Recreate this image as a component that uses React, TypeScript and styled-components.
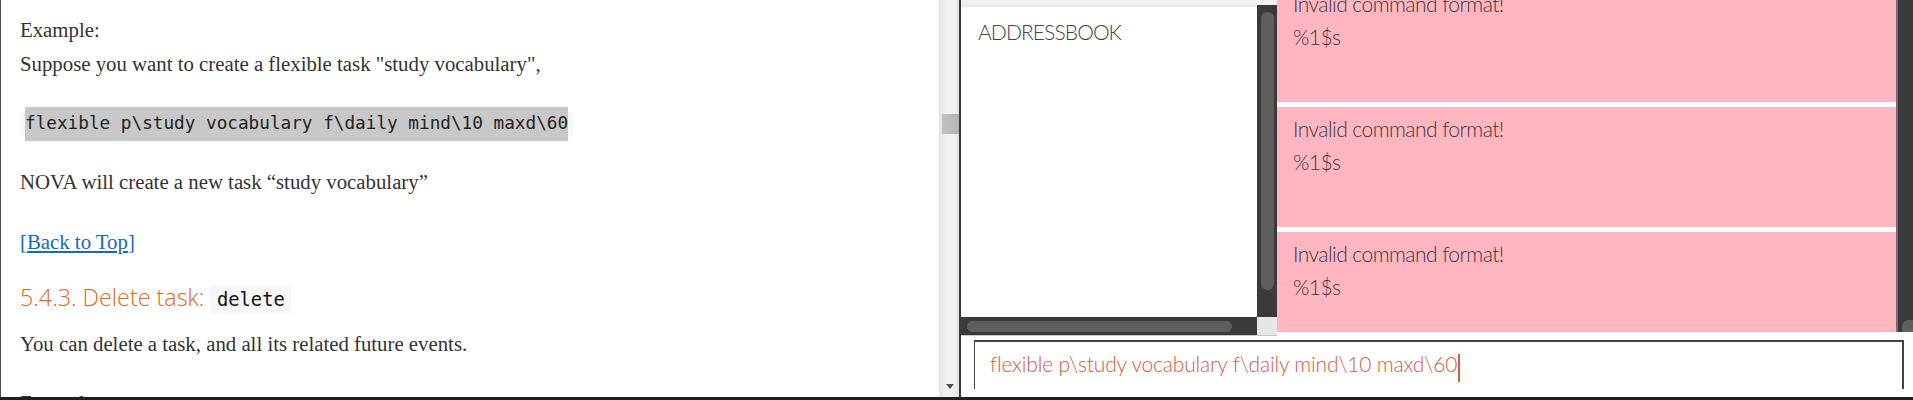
import React from "react";
import styled, { createGlobalStyle } from "styled-components";

const Global = createGlobalStyle`
  html, body { margin: 0; padding: 0; background: #fff; overflow: hidden; }
  #root { width: 1913px; height: 400px; }
`;

const Screen = styled.div`
  width: 1913px;
  height: 400px;
  display: flex;
  flex-direction: column;
  overflow: hidden;
`;

const Desktop = styled.div`
  height: 397px;
  display: flex;
  flex-direction: row;
`;

const Taskbar = styled.div`
  height: 3px;
  background: #202020;
`;

/* ---------- left document pane ---------- */
const DocPane = styled.div`
  width: 959px;
  display: flex;
  flex-direction: row;
  background: #fff;
`;

const DocContent = styled.div`
  flex: 1;
  border-left: 1px solid #4d4d4d;
  padding-left: 19px;
  overflow: hidden;
  font-family: "Liberation Serif", "Times New Roman", serif;
  font-size: 20.8px;
  line-height: 27px;
  color: #333;
`;

const Para = styled.div<{ $mt: number }>`
  margin-top: ${(p) => p.$mt}px;
  white-space: nowrap;
`;

const Link = styled.a`
  color: #1668c2;
  text-decoration: none;
  span { text-decoration: underline; }
`;

const CodeBlock = styled.div<{ $mt: number }>`
  margin-top: ${(p) => p.$mt}px;
  width: max-content;
  height: 25px;
  padding: 0 5px;
  display: flex;
  align-items: center;
  background: #f7f7f8;
  border-radius: 4px;
`;

const CodeHighlight = styled.span`
  display: block;
  height: 33.4px;
  line-height: 33px;
  background: #c8c8c8;
  font-family: "DejaVu Sans Mono", monospace;
  font-size: 17.7px;
  color: #222;
  white-space: pre;
`;

const Heading = styled.div<{ $mt: number }>`
  margin-top: ${(p) => p.$mt}px;
  font-family: "Open Sans", "DejaVu Sans", sans-serif;
  font-weight: 300;
  font-size: 23.3px;
  line-height: 32px;
  color: #e3661c;
  white-space: nowrap;
`;

const InlineCode = styled.code`
  display: inline-block;
  height: 29px;
  line-height: 29px;
  padding: 0 6px 0 6.5px;
  background: #f7f7f8;
  border-radius: 4px;
  font-family: "DejaVu Sans Mono", monospace;
  font-size: 18.8px;
  font-weight: 400;
  color: #111;
`;

const DocScrollbar = styled.div`
  width: 20px;
  display: flex;
  flex-direction: column;
  align-items: flex-end;
  background: linear-gradient(to right, #e4e4e4 0%, #f0f0f0 35%, #efefef 80%, #dcdcdc 100%);
`;

const DocThumb = styled.div`
  margin-top: 114px;
  width: 17px;
  height: 20px;
  background: linear-gradient(to right, #c2c2c2, #b4b4b4);
`;

const DocArrow = styled.div`
  margin-top: auto;
  margin-bottom: 8px;
  margin-right: 5px;
  width: 0;
  height: 0;
  border-left: 4.5px solid transparent;
  border-right: 4.5px solid transparent;
  border-top: 5px solid #505050;
`;

const Divider = styled.div`
  width: 2px;
  background: #3a3a3a;
`;

/* ---------- right application window ---------- */
const AppWindow = styled.div`
  flex: 1;
  display: flex;
  flex-direction: column;
  background: #fff;
  font-family: "Lato", "Segoe UI", sans-serif;
  font-weight: 300;
`;

const AppTop = styled.div`
  height: 336px;
  display: flex;
  flex-direction: row;
  align-items: flex-start;
`;

const ListPanel = styled.div`
  width: 316px;
  height: 336px;
  display: flex;
  flex-direction: column;
  border-bottom: 1px solid #c8c8c8;
  box-sizing: border-box;
`;

const ListBand = styled.div`
  height: 5px;
  background: #f0f0f0;
`;

const ListBody = styled.div`
  height: 312px;
  display: flex;
  flex-direction: row;
`;

const ListViewport = styled.div`
  flex: 1;
  padding: 10px 0 0 17px;
  border-top: 2px solid #e9e9e9;
  box-sizing: border-box;
  background: #fff;
`;

const ListItem = styled.div`
  font-size: 21px;
  letter-spacing: -0.9px;
  line-height: 30px;
  color: #444;
`;

const VBar = styled.div`
  width: 20px;
  background: #3a3a3a;
  display: flex;
  flex-direction: column;
  align-items: center;
`;

const VThumb = styled.div`
  margin-top: 7px;
  margin-left: 1px;
  width: 13px;
  height: 278px;
  border-radius: 6px;
  background: #5e5e5e;
`;

const HBarRow = styled.div`
  height: 18px;
  display: flex;
  flex-direction: row;
`;

const HBar = styled.div`
  flex: 1;
  background: #3a3a3a;
  padding: 4px 0 0 6px;
  box-sizing: border-box;
`;

const HThumb = styled.div`
  width: 265px;
  height: 11px;
  border-radius: 6px;
  background: #5e5e5e;
`;

const Corner = styled.div`
  width: 20px;
  background: #e6e6e6;
`;

const ResultPanel = styled.div`
  flex: 1;
  height: 332px;
  display: flex;
  flex-direction: row;
  overflow: hidden;
`;

const Cards = styled.div`
  flex: 1;
  display: flex;
  flex-direction: column;
  gap: 5px;
  margin-top: -18px;
  background: #fff;
`;

const Card = styled.div`
  height: 120px;
  flex-shrink: 0;
  background: #ffb6c1;
  padding: 5px 0 0 16px;
  box-sizing: border-box;
  font-size: 21px;
  letter-spacing: -0.55px;
  line-height: 33px;
  color: #3d3839;
`;

const ResultScroll = styled.div`
  width: 15px;
  border-left: 2px solid #7e6a74;
  background: #3a3a3a;
  display: flex;
  flex-direction: column;
  justify-content: flex-end;
  align-items: flex-end;
`;

const ResultThumb = styled.div`
  width: 11px;
  height: 16px;
  margin-bottom: -4px;
  border-radius: 6px 0 0 0;
  background: #5e5e5e;
`;

const CommandRow = styled.div`
  height: 61px;
  padding: 4px 9px 0 13px;
  box-sizing: border-box;
`;

const CommandBox = styled.div`
  height: 49px;
  border-top: 2px solid #444;
  border-left: 1px solid #444;
  border-right: 2px solid #444;
  padding-left: 15px;
  box-sizing: border-box;
  font-size: 21px;
  letter-spacing: -0.17px;
  line-height: 43px;
  color: #d9583f;
  white-space: pre;
`;

const Caret = styled.span`
  display: inline-block;
  width: 1.5px;
  height: 28px;
  margin-left: 1px;
  vertical-align: -10px;
  background: #d9583f;
`;

export default function App() {
  const cards = [0, 1, 2];
  return (
    <>
      <Global />
      <Screen>
        <Desktop>
          <DocPane>
            <DocContent>
              <Para $mt={16}>Example:</Para>
              <Para $mt={7}>Suppose you want to create a flexible task "study vocabulary",</Para>
              <CodeBlock $mt={34.5}>
                <CodeHighlight>{"flexible p\\study vocabulary f\\daily mind\\10 maxd\\60"}</CodeHighlight>
              </CodeBlock>
              <Para $mt={31}>NOVA will create a new task “study vocabulary”</Para>
              <Para $mt={33}>
                <Link href="#top">[<span>Back to Top</span>]</Link>
              </Para>
              <Heading $mt={26}>
                5.4.3. Delete task: <InlineCode>delete</InlineCode>
              </Heading>
              <Para $mt={16.5}>You can delete a task, and all its related future events.</Para>
              <Para $mt={32}>Example:</Para>
            </DocContent>
            <DocScrollbar>
              <DocThumb />
              <DocArrow />
            </DocScrollbar>
          </DocPane>
          <Divider />
          <AppWindow>
            <AppTop>
              <ListPanel>
                <ListBand />
                <ListBody>
                  <ListViewport>
                    <ListItem>ADDRESSBOOK</ListItem>
                  </ListViewport>
                  <VBar>
                    <VThumb />
                  </VBar>
                </ListBody>
                <HBarRow>
                  <HBar>
                    <HThumb />
                  </HBar>
                  <Corner />
                </HBarRow>
              </ListPanel>
              <ResultPanel>
                <Cards>
                  {cards.map((i) => (
                    <Card key={i}>
                      Invalid command format!
                      <br />
                      %1$s
                    </Card>
                  ))}
                </Cards>
                <ResultScroll>
                  <ResultThumb />
                </ResultScroll>
              </ResultPanel>
            </AppTop>
            <CommandRow>
              <CommandBox>
                {"flexible p\\study vocabulary f\\daily mind\\10 maxd\\60"}
                <Caret />
              </CommandBox>
            </CommandRow>
          </AppWindow>
        </Desktop>
        <Taskbar />
      </Screen>
    </>
  );
}
